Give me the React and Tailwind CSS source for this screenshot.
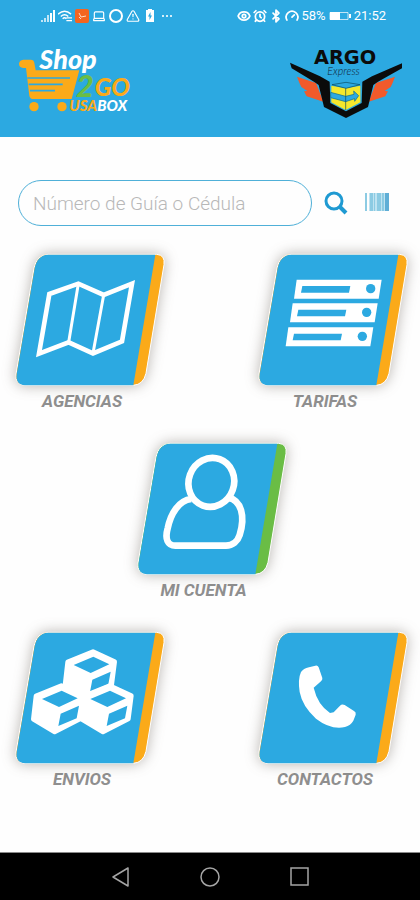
import { useState } from 'react';
import { AlarmClock, Bluetooth, Eye, Gauge, Laptop, TriangleAlert } from 'lucide-react';


const ICONS = {
  map: (
    <g fill="none" stroke="#fff" strokeLinejoin="miter">
      <path strokeWidth="14" d="M148 162L235 131L311 165L396 131L366 304L279 340L206 307L117 341Z" />
      <path strokeWidth="9" d="M235 131L206 307M311 165L279 340" />
    </g>
  ),
  server: (
    <g transform="translate(-9 0)">
      {[[0, 0], [-12, 71], [-25, 143]].map(([x, y]) => (
        <g key={y} transform={`translate(${x} ${y})`}>
          <path fill="#fff" d="M170 119H425L416 176H162Z" />
          <path fill="#2ca9e1" d="M187 138H331L327 158H183Z" />
          <ellipse fill="#2ca9e1" cx="392" cy="146" rx="14" ry="14" />
        </g>
      ))}
    </g>
  ),
  user: (
    <g fill="none" stroke="#fff" strokeWidth="20" strokeLinejoin="round">
      <ellipse cx="268" cy="160" rx="68" ry="74" transform="rotate(20 268 160)" />
      <path d="M208 210C170 214 146 254 137 298C128 330 137 350 160 350H312C332 350 347 337 353 318C371 260 357 214 320 206" />
    </g>
  ),
  cubes: (
    <g strokeLinejoin="round" transform="translate(0 -8)">
      {[[0, 0], [-95, 102], [50, 102]].map(([x, y]) => (
        <g key={x} transform={`translate(${x} ${y})`}>
          <path fill="#fff" stroke="#fff" strokeWidth="14" d="M279 109L344 139L335 209L259 248L195 210L203 140Z" />
          <path fill="#2ca9e1" d="M221 149L280 124L328 147L272 173ZM277 193L332 169L325 207L270 230Z" />
        </g>
      ))}
    </g>
  ),
  phone: (
    <path
      fill="#fff"
      d="M198 148L217 143Q224 141 227 148L238 180Q239 186 234 190L212 209Q224 260 261 285L272 283L291 263Q297 257 305 261L333 279Q340 283 338 290L331 308Q323 322 306 327Q263 336 219 302Q178 265 170 222Q164 184 174 162Q181 152 198 148Z"
    />
  ),
};

function Tile({ label, icon, accent = '#fbaa19' }) {
  return (
    <button type="button" className="flex w-[148px] flex-col cursor-pointer">
      <svg
        viewBox="48 42 444 393"
        className="block h-[131px] w-full overflow-visible drop-shadow-[0_0_7px_rgba(80,70,60,0.4)]"
        aria-hidden="true"
      >
        <path
          fill={accent}
          stroke="#fff"
          strokeWidth="3"
          d="M144 43H470Q496 45 492 74L438 400Q430 434 400 436H75Q44 434 48 402L102 84Q110 45 144 43Z"
        />
        <path fill="#2ca9e1" d="M144 44H466L400 436H75Q46 434 50 402L104 84Q112 46 144 44Z" />
        {ICONS[icon]}
      </svg>
      <span className="mt-1 pr-4 text-center text-[17px] leading-6 font-bold italic text-[#8f8f8f]">{label}</span>
    </button>
  );
}

function StatusBar() {
  return (
    <div className="flex h-8 items-center justify-between pr-[34px] pl-[41px] text-white">
      <div className="flex items-center gap-[3px]">
        <svg viewBox="0 0 14 14" className="h-3.5 w-3.5" fill="currentColor" aria-hidden="true">
          <path opacity="0.7" d="M0 11h2v2H0zM3 9h2v4H3zM6 6h2v7H6z" />
          <path d="M9 4h2v9H9zM12 1h2v12h-2z" />
        </svg>
        <svg viewBox="0 0 15 14" className="h-3.5 w-3.5" fill="none" stroke="currentColor" strokeWidth="1.5" aria-hidden="true">
          <path d="M0 5Q7-1 14 5M3 7.500Q7 4 11 7.500M5 10Q7 8 9 10M9 9h6M9 12h6" />
        </svg>
        <svg viewBox="0 0 14 14" className="h-3.5 w-3.5" aria-hidden="true">
          <rect width="14" height="14" rx="2" fill="#f4651f" />
          <path d="M4 4l2 4 5-1M4 8l2 2" stroke="#ffd9c4" fill="none" />
        </svg>
        <Laptop className="h-3.5 w-3.5" />
        <svg viewBox="0 0 14 14" className="h-3.5 w-3.5" fill="none" stroke="currentColor" aria-hidden="true">
          <circle cx="7" cy="7" r="6" strokeWidth="2" />
        </svg>
        <TriangleAlert className="h-3.5 w-3.5" />
        <svg viewBox="0 0 14 14" className="h-3.5 w-3.5" aria-hidden="true">
          <path fill="currentColor" d="M5 0h4v1h2v12H3V1h2z" />
          <path fill="#2ca9e1" d="M7.500 3L5 7.500h1.500V11L9 6.500H7.500z" />
        </svg>
        <svg viewBox="0 0 14 14" className="h-3.5 w-3.5" fill="currentColor" aria-hidden="true">
          <path opacity="0.8" d="M2 6h2v2H2zM6 6h2v2H6zM10 6h2v2h-2z" />
        </svg>
      </div>
      <div className="flex items-center gap-[2px] text-[13px] leading-4">
        <Eye className="h-3.5 w-3.5" strokeWidth={3} />
        <AlarmClock className="h-3.5 w-3.5" strokeWidth={3} />
        <Bluetooth className="h-3.5 w-3.5" strokeWidth={3} />
        <Gauge className="h-3.5 w-3.5" strokeWidth={3} />
        <span>58%</span>
        <svg viewBox="0 0 22 12" className="mx-px h-3 w-[22px]" aria-hidden="true">
          <path fill="none" stroke="currentColor" opacity="0.7" d="M1 2.500h18v7H1z" />
          <path fill="currentColor" d="M1 2h10v8H1zM20 4h2v4h-2z" />
        </svg>
        <span>21:52</span>
      </div>
    </div>
  );
}

function ShopLogo() {
  return (
    <svg viewBox="54 130 360 228" className="h-[76px] w-[120px]" role="img" aria-label="Shop2Go UsaBox">
      <path
        fill="#fbaa19"
        d="M70 180H92Q102 180 103 190L107 212H238L215 298H100Q90 298 88 288L78 205H70Q57 203 57 192Q58 181 70 180Z"
      />
      <path stroke="#2ca9e1" strokeWidth="5" d="M82 235H210M86 254H188M90 273H165" />
      <circle cx="102" cy="321" r="14" fill="#fbaa19" />
      <circle cx="186" cy="321" r="14" fill="#fbaa19" />
      <g fontFamily="Lato, sans-serif" fontWeight="900" fontStyle="italic">
        <text x="118" y="209" fontSize="81" fill="#fff">Shop</text>
        <text x="228" y="291" fontSize="92" fill="#6abd45">2</text>
        <text x="284" y="290" fontSize="74" fill="#fbaa19">GO</text>
        <text x="208" y="333" fontSize="45" fill="#fbaa19">USA<tspan fill="#fff">BOX</tspan></text>
      </g>
    </svg>
  );
}

function ArgoLogo() {
  return (
    <svg viewBox="237 130 342 228" className="h-[76px] w-[114px]" role="img" aria-label="Argo Express">
      <text x="312" y="193" fontFamily="DejaVu Sans, sans-serif" fontWeight="700" fontSize="58" fill="#0b0b0b">ARGO</text>
      <text x="352" y="225" fontFamily="Lato, sans-serif" fontWeight="300" fontStyle="italic" fontSize="32" fill="#123">Express</text>
      <g fill="#f15a2b">
        <path d="M261 231L318 250L340 306L290 290L282 275L292 274L274 262L268 249Z" />
        <path d="M555 231L498 250L476 306L526 290L534 275L524 274L542 262L548 249Z" />
      </g>
      <path
        fill="#0b0b0b"
        d="M240 189L330 230L359 246L361 310L408 335L455 310L457 246L486 230L576 191V206L504 246L490 256L474 322L408 355L342 322L326 256L312 246L245 206Z"
      />
      <path fill="#f5e82c" d="M364 258L407 266L451 258V308L407 331L364 308Z" />
      <path fill="#2ca9e1" stroke="#0b4a5c" strokeWidth="2" d="M366 255L408 248L450 255L408 266Z" />
      <path fill="#2ca9e1" stroke="#146a80" strokeWidth="2" d="M362 278L407 290L432 284L431 274L446 288L434 305V297L407 306L362 294Z" />
      <path stroke="#0b4a5c" strokeWidth="2" d="M407 266V331" />
    </svg>
  );
}

function SearchBar() {
  const [guide, setGuide] = useState('');

  return (
    <form className="flex items-center pr-[31px] pl-[18px]" onSubmit={(e) => e.preventDefault()}>
      <input
        type="text"
        aria-label="Número de Guía o Cédula"
        placeholder="Número de Guía o Cédula"
        value={guide}
        onChange={(e) => setGuide(e.target.value)}
        className="h-[46px] min-w-0 flex-1 rounded-full border border-[#4fb0d8] px-3.5 text-[19px] font-light text-gray-700 placeholder:text-[#b8b8b8] focus:outline-none"
      />
      <button type="submit" aria-label="Buscar" className="ml-3 cursor-pointer">
        <svg viewBox="0 0 24 24" className="h-6 w-6" fill="none" stroke="#1f9ad2" aria-hidden="true">
          <circle cx="10" cy="10" r="8" strokeWidth="3" />
          <path strokeWidth="4" d="M15.500 15.500L22 22" />
        </svg>
      </button>
      <button type="button" aria-label="Escanear código" className="ml-[17px] cursor-pointer">
        <svg viewBox="0 0 24 24" className="h-6 w-6" aria-hidden="true">
          <path fill="#bfe3f1" d="M4 2h20v18H4z" />
          <path fill="#8ccbe3" d="M0 2h2v18H0zM5 2h3v18H5zM9 2h1v18H9zM12 2h4v18h-4zM17 2h2v18h-2z" />
          <path fill="#5faed6" d="M20 2h4v18h-4z" />
        </svg>
      </button>
    </form>
  );
}

export default function App() {
  return (
    <div className="flex min-h-screen flex-col bg-[#fefefe] font-['Roboto',sans-serif]">
      <header className="bg-[#2ca9e1] pb-[18px]">
        <StatusBar />
        <div className="flex items-start justify-between pt-[11px] pr-[17px] pl-[18px]">
          <ShopLogo />
          <ArgoLogo />
        </div>
      </header>

      <main className="flex flex-1 flex-col gap-7 pt-[43px] pb-8">
        <SearchBar />
        <div className="flex flex-col gap-[30px] pr-[13px] pl-4">
          <div className="flex justify-between">
            <Tile label="AGENCIAS" icon="map" />
            <Tile label="TARIFAS" icon="server" />
          </div>
          <div className="flex justify-center">
            <Tile label="MI CUENTA" icon="user" accent="#6abd45" />
          </div>
          <div className="flex justify-between">
            <Tile label="ENVIOS" icon="cubes" />
            <Tile label="CONTACTOS" icon="phone" />
          </div>
        </div>
      </main>

      <nav className="flex h-12 items-center justify-center gap-[66px] border-t border-[#8a8a8a] bg-black text-[#a5a5a5]">
        <button type="button" aria-label="Atrás" className="cursor-pointer">
          <svg viewBox="0 0 24 24" className="h-6 w-6" fill="none" stroke="currentColor" strokeWidth="1.500" aria-hidden="true">
            <path strokeLinejoin="round" d="M20 3V21L5 12Z" />
          </svg>
        </button>
        <button type="button" aria-label="Inicio" className="cursor-pointer">
          <svg viewBox="0 0 24 24" className="h-6 w-6" fill="none" stroke="currentColor" strokeWidth="1.500" aria-hidden="true">
            <circle cx="12" cy="12" r="9" />
          </svg>
        </button>
        <button type="button" aria-label="Recientes" className="cursor-pointer">
          <svg viewBox="0 0 24 24" className="h-6 w-6" fill="none" stroke="currentColor" strokeWidth="1.500" aria-hidden="true">
            <rect x="3" y="3" width="17" height="17" />
          </svg>
        </button>
      </nav>
    </div>
  );
}
